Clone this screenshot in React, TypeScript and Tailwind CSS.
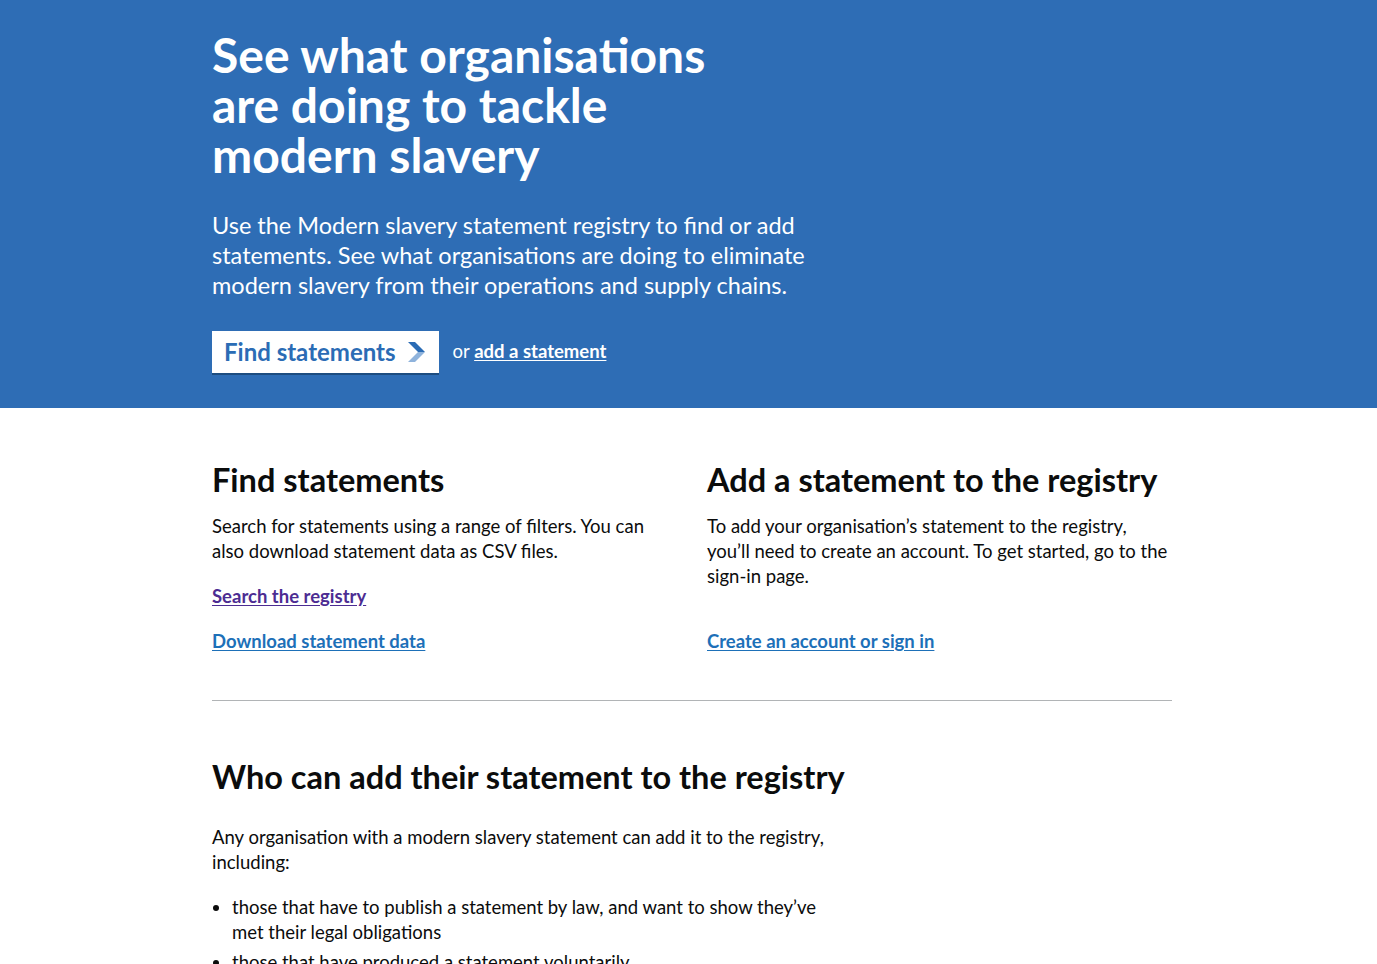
const font = { fontFamily: 'Lato, "Noto Sans", Arial, sans-serif' };

const Chevron = () => (
  <svg width="17" height="20" viewBox="0 0 17 20" className="ml-3 shrink-0">
    <polygon points="0,0 7,0 17,10 10,10" fill="#2b6cb5" />
    <polygon points="10,10 17,10 7,20 0,20" fill="#8fb3dc" />
  </svg>
);

export default function App() {
  return (
    <div className="min-h-screen bg-white text-[#0b0c0c]" style={font}>
      <section className="bg-[#2e6db5] text-white">
        <div className="ml-[212px] w-[960px] pt-[30px] pb-[35px]">
          <h1 className="text-[48px] leading-[50px] font-bold">
            See what organisations
            <br />
            are doing to tackle
            <br />
            modern slavery
          </h1>
          <p className="mt-[30px] w-[610px] text-[23.5px] leading-[30px]">
            Use the Modern slavery statement registry to find or add statements. See what organisations are doing to
            eliminate modern slavery from their operations and supply chains.
          </p>
          <div className="mt-[31px] flex items-center">
            <a
              href="#"
              className="flex h-[42px] items-center bg-white pl-3 pr-[14px] text-[24px] font-bold text-[#2b6cb5] shadow-[0_2px_0_#1d4d80]"
            >
              Find statements
              <Chevron />
            </a>
            <span className="ml-[14px] text-[18.5px]">
              or{' '}
              <a href="#" className="font-bold underline underline-offset-2">
                add a statement
              </a>
            </span>
          </div>
        </div>
      </section>

      <main className="ml-[212px] w-[960px] pt-[52px] text-[18.5px] leading-[25px]">
        <div className="grid grid-cols-2 gap-[30px]">
          <div>
            <h2 className="text-[32.5px] leading-[40px] font-bold">Find statements</h2>
            <p className="mt-[14px]">
              Search for statements using a range of filters. You can also download statement data as CSV files.
            </p>
            <p className="mt-[20px]">
              <a href="#" className="font-bold text-[#4c2c92] underline underline-offset-2">
                Search the registry
              </a>
            </p>
            <p className="mt-[20px]">
              <a href="#" className="font-bold text-[#1d70b8] underline underline-offset-2">
                Download statement data
              </a>
            </p>
          </div>
          <div>
            <h2 className="text-[32.5px] leading-[40px] font-bold">Add a statement to the registry</h2>
            <p className="mt-[14px]">
              To add your organisation’s statement to the registry, you’ll need to create an account. To get started,
              go to the sign-in page.
            </p>
            <p className="mt-[40px]">
              <a href="#" className="font-bold text-[#1d70b8] underline underline-offset-2">
                Create an account or sign in
              </a>
            </p>
          </div>
        </div>

        <hr className="mt-[46px] border-t border-[#b1b4b6]" />

        <h2 className="mt-[56px] text-[32.5px] leading-[40px] font-bold">
          Who can add their statement to the registry
        </h2>
        <p className="mt-[28px] w-[630px]">
          Any organisation with a modern slavery statement can add it to the registry, including:
        </p>
        <ul className="mt-[20px] w-[630px] list-disc pl-[20px]">
          <li className="mb-[5px]">
            those that have to publish a statement by law, and want to show they’ve met their legal obligations
          </li>
          <li className="mb-[5px]">those that have produced a statement voluntarily</li>
        </ul>
      </main>
    </div>
  );
}
